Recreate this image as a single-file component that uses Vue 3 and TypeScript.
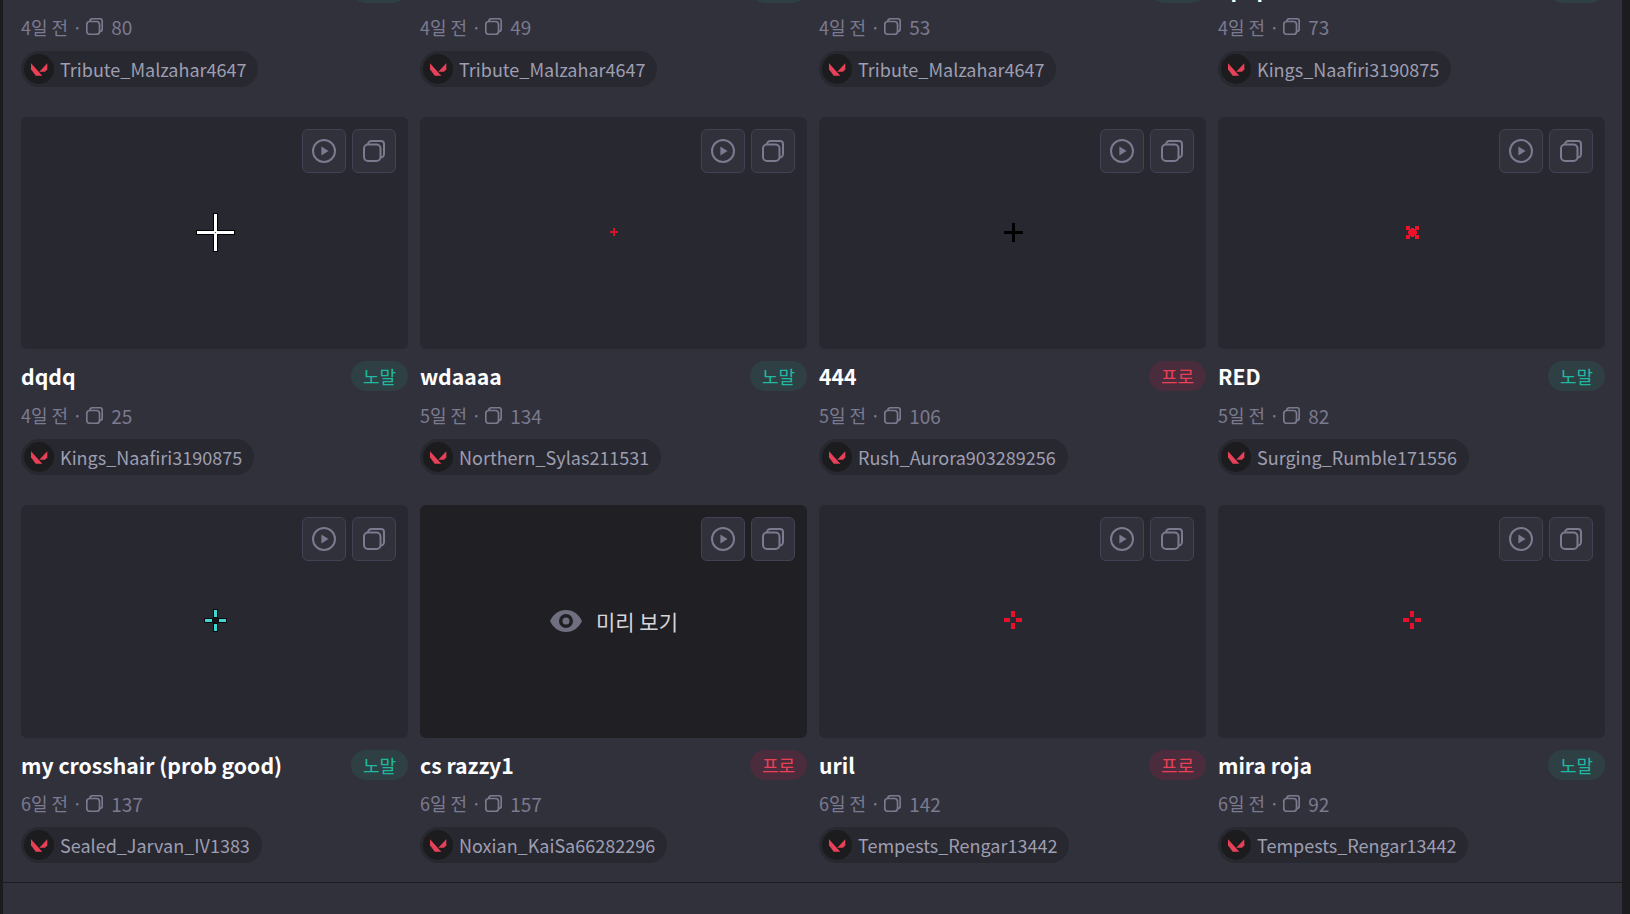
<script setup lang="ts">
interface Bar {
  x: number
  y: number
  w: number
  h: number
  fill: string
}

interface Crosshair {
  id: string
  title: string
  tier: 'normal' | 'pro'
  age: string
  copies: number
  author: string
  bars: Bar[]
  hover?: boolean
}

// four arms on a 49x49 canvas, on whole pixels: gap is measured from the edge of the centre band
function arms(gap: number, len: number, thick: number, fill: string, outline = ''): Bar[] {
  const lo = Math.floor(24.5 - thick / 2)
  const hi = lo + thick
  const rects = [
    { x: lo, y: lo - gap - len, w: thick, h: len },
    { x: lo, y: hi + gap, w: thick, h: len },
    { x: lo - gap - len, y: lo, w: len, h: thick },
    { x: hi + gap, y: lo, w: len, h: thick },
  ]
  if (gap === 0) rects.push({ x: lo, y: lo, w: thick, h: thick })
  const out: Bar[] = []
  if (outline) {
    rects.forEach((r) => out.push({ x: r.x - 1, y: r.y - 1, w: r.w + 2, h: r.h + 2, fill: outline }))
  }
  rects.forEach((r) => out.push({ ...r, fill }))
  return out
}

const red = '#f0102a'

const none: Bar[] = []

const items: Crosshair[] = [
  { id: 'a1', title: '', tier: 'normal', age: '4일 전', copies: 80, author: 'Tribute_Malzahar4647', bars: none },
  { id: 'a2', title: '', tier: 'normal', age: '4일 전', copies: 49, author: 'Tribute_Malzahar4647', bars: none },
  { id: 'a3', title: '', tier: 'normal', age: '4일 전', copies: 53, author: 'Tribute_Malzahar4647', bars: none },
  { id: 'a4', title: 'apap', tier: 'normal', age: '4일 전', copies: 73, author: 'Kings_Naafiri3190875', bars: none },
  {
    id: 'b1',
    title: 'dqdq',
    tier: 'normal',
    age: '4일 전',
    copies: 25,
    author: 'Kings_Naafiri3190875',
    bars: [...arms(0, 17, 3, '#ffffff', '#000000'), { x: 24, y: 24, w: 1, h: 1, fill: '#55555c' }],
  },
  { id: 'b2', title: 'wdaaaa', tier: 'normal', age: '5일 전', copies: 134, author: 'Northern_Sylas211531', bars: arms(0, 3, 2, '#d8102a') },
  { id: 'b3', title: '444', tier: 'pro', age: '5일 전', copies: 106, author: 'Rush_Aurora903289256', bars: arms(0, 8, 3, '#000000') },
  {
    id: 'b4',
    title: 'RED',
    tier: 'normal',
    age: '5일 전',
    copies: 82,
    author: 'Surging_Rumble171556',
    bars: [
      ...arms(0, 3, 3, red),
      { x: 21, y: 21, w: 7, h: 7, fill: red },
      { x: 18, y: 18, w: 4, h: 4, fill: red },
      { x: 27, y: 18, w: 4, h: 4, fill: red },
      { x: 18, y: 27, w: 4, h: 4, fill: red },
      { x: 27, y: 27, w: 4, h: 4, fill: red },
    ],
  },
  {
    id: 'c1',
    title: 'my crosshair (prob good)',
    tier: 'normal',
    age: '6일 전',
    copies: 137,
    author: 'Sealed_Jarvan_IV1383',
    bars: [...arms(2, 7, 3, '#3ed8d0', '#0b0b10'), { x: 22, y: 22, w: 5, h: 5, fill: '#141418' }],
  },
  { id: 'c2', title: 'cs razzy1', tier: 'pro', age: '6일 전', copies: 157, author: 'Noxian_KaiSa66282296', bars: none, hover: true },
  { id: 'c3', title: 'uril', tier: 'pro', age: '6일 전', copies: 142, author: 'Tempests_Rengar13442', bars: arms(1, 6, 4, '#e8102a') },
  { id: 'c4', title: 'mira roja', tier: 'normal', age: '6일 전', copies: 92, author: 'Tempests_Rengar13442', bars: arms(1, 6, 4, '#e8102a') },
]

const tierLabel = { normal: '노말', pro: '프로' }
</script>

<template>
  <div class="shell">
    <main class="main">
      <section class="grid">
        <article v-for="item in items" :key="item.id" class="card">
          <div class="preview" :class="{ hover: item.hover }">
            <div class="tools">
              <button class="tool" type="button" aria-label="play">
                <svg width="26" height="26" viewBox="0 0 26 26" fill="none">
                  <circle cx="13" cy="13" r="11" stroke="#7b7a8e" stroke-width="2" />
                  <path d="M10.4 8.6 17.6 13l-7.2 4.4z" fill="#7b7a8e" />
                </svg>
              </button>
              <button class="tool" type="button" aria-label="copy">
                <svg width="26" height="26" viewBox="0 0 26 26" fill="none" stroke="#7b7a8e" stroke-width="2">
                  <rect x="3" y="6.5" width="16.5" height="16.5" rx="4" />
                  <path d="M7 6.500A3.500 3.500 0 0 1 10.500 3h9.500a3 3 0 0 1 3 3v10a3.500 3.500 0 0 1-3.500 3.500" />
                </svg>
              </button>
            </div>
            <div v-if="item.hover" class="peek">
              <svg width="32" height="22" viewBox="0 0 32 22">
                <path
                  d="M16 0C8.6 0 3 4.6 0 11c3 6.400 8.600 11 16 11s13-4.600 16-11C29 4.600 23.400 0 16 0zm0 18a7 7 0 1 1 0-14 7 7 0 0 1 0 14zm0-3.500a3.500 3.500 0 1 0 0-7 3.500 3.500 0 0 0 0 7z"
                  fill="#6f6f80"
                />
              </svg>
              <span>미리 보기</span>
            </div>
            <svg v-else-if="item.bars.length" class="mark" width="49" height="49" viewBox="0 0 49 49" shape-rendering="crispEdges">
              <rect v-for="(b, i) in item.bars" :key="i" :x="b.x" :y="b.y" :width="b.w" :height="b.h" :fill="b.fill" />
            </svg>
          </div>
          <div class="head">
            <h3 class="title">{{ item.title }}</h3>
            <span class="tier" :class="item.tier">{{ tierLabel[item.tier] }}</span>
          </div>
          <div class="meta">
            <span>{{ item.age }} ·</span>
            <svg class="meta-icon" width="17" height="17" viewBox="2 2 22 22" fill="none" stroke="#7b7a8e" stroke-width="2.2">
              <rect x="3" y="6.500" width="16.500" height="16.500" rx="4" />
              <path d="M7 6.500A3.500 3.500 0 0 1 10.500 3h9.500a3 3 0 0 1 3 3v10a3.500 3.500 0 0 1-3.500 3.500" />
            </svg>
            <span class="count">{{ item.copies }}</span>
          </div>
          <div class="author">
            <span class="avatar">
              <svg width="30" height="30" viewBox="0 0 30 30">
                <path d="M7 9.300 18.300 21.700h-6.600L7 15.300z" fill="#e84057" />
                <path d="M23.300 9.300v6l-2.300 2.400h-5.700z" fill="#e84057" />
              </svg>
            </span>
            <span class="author-name">{{ item.author }}</span>
          </div>
        </article>
      </section>
    </main>
  </div>
</template>

<style scoped>
.shell {
  height: 914px;
  overflow: hidden;
  box-sizing: border-box;
  border-left: 3px solid #1c1c1f;
  border-right: 8px solid #1c1c1f;
  background: #31313c;
  font-family: "Noto Sans CJK KR", "Noto Sans", sans-serif;
}
.main {
  padding: 0 17px 19px 18px;
  border-bottom: 1px solid #1c1c1f;
}
.grid {
  display: grid;
  grid-template-columns: repeat(4, 387px);
  column-gap: 12px;
  row-gap: 30.45px;
  margin-top: -271.35px;
}
.card {
  display: flex;
  flex-direction: column;
  min-width: 0;
}
.preview {
  position: relative;
  height: 232.4px;
  display: flex;
  align-items: center;
  justify-content: center;
  background: #282830;
  border-radius: 6px;
}
.preview.hover {
  background: #1f1f24;
}
.tools {
  position: absolute;
  top: 12px;
  right: 12px;
  display: flex;
  gap: 6px;
}
.tool {
  width: 44px;
  height: 44px;
  padding: 0;
  display: flex;
  align-items: center;
  justify-content: center;
  box-sizing: border-box;
  background: #31313c;
  border: 1px solid #424254;
  border-radius: 6px;
}
.mark {
  display: block;
  margin-left: 2px;
  margin-top: -1px;
}
.peek {
  display: flex;
  align-items: center;
  gap: 14px;
  padding-left: 1px;
  font-size: 21px;
  color: #d6d6da;
}
.head {
  display: flex;
  align-items: center;
  justify-content: space-between;
  height: 30px;
  margin-top: 11.9px;
}
.title {
  margin: 0;
  font-size: 21.2px;
  font-weight: 700;
  line-height: 30px;
  color: #ffffff;
}
.tier {
  width: 57px;
  height: 30px;
  display: flex;
  align-items: center;
  justify-content: center;
  border-radius: 15px;
  font-size: 18px;
}
.tier.normal {
  background: #2f4044;
  color: #1fb8a0;
}
.tier.pro {
  background: #4a2c3c;
  color: #e84057;
}
.meta {
  height: 47.6px;
  display: flex;
  align-items: center;
  font-size: 18px;
  color: #7b7a8e;
}
.meta-icon {
  margin: 0 8px 0 4px;
}
.count {
  font-size: 19px;
}
.author {
  align-self: flex-start;
  height: 36px;
  display: flex;
  align-items: center;
  gap: 6px;
  padding: 0 12px 0 3px;
  background: #282830;
  border-radius: 18px;
  font-size: 18px;
  color: #9e9eb1;
}
.avatar {
  width: 30px;
  height: 30px;
  display: block;
  background: #1c1c1f;
  border-radius: 50%;
}
.avatar svg {
  display: block;
}
</style>

<style>
html,
body {
  margin: 0;
  background: #31313c;
}
</style>
